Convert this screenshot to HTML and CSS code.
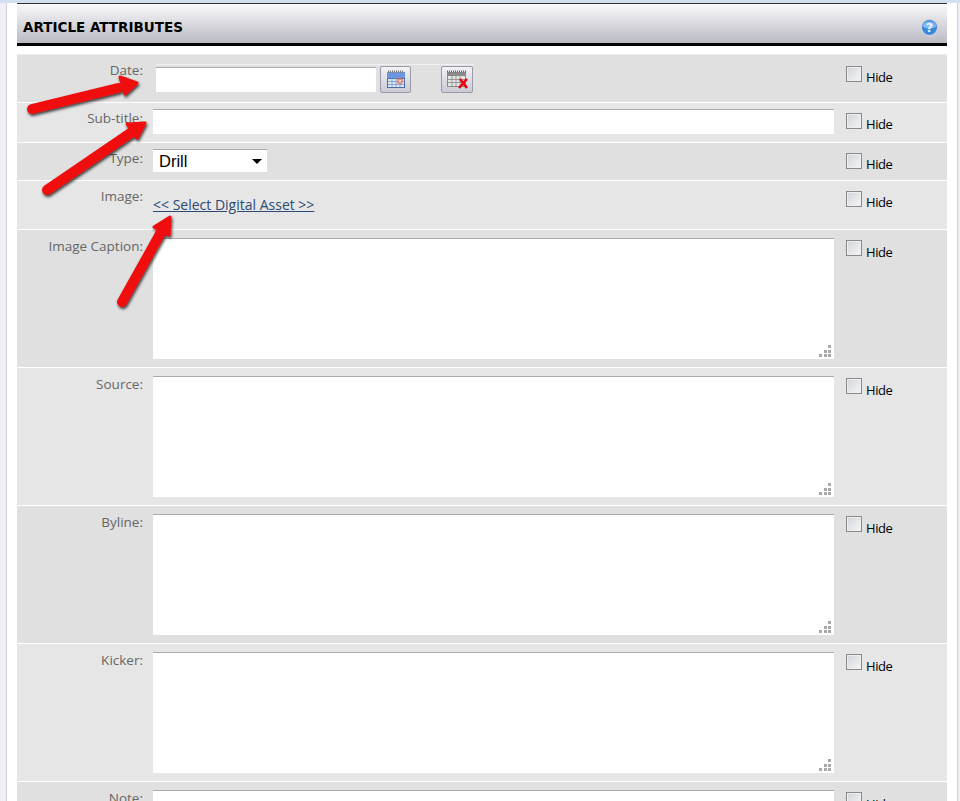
FILE: index.html
```html
<!DOCTYPE html>
<html lang="en">
<head>
<meta charset="utf-8">
<title>Article Attributes</title>
<link rel="stylesheet" href="styles.css">
</head>
<body>
<div class="topline"></div>
<div class="page">
  <div class="gutter"></div>
  <main class="panel">
    <header class="head">
      <h1>ARTICLE ATTRIBUTES</h1>
      <svg class="help" width="18" height="18" viewBox="0 0 18 18"><circle cx="9" cy="9" r="9" fill="#cfd0d6"/><circle cx="8.500" cy="8.500" r="7.500" fill="#3a88dc"/><path d="M1.800 7.500a6.800 6 0 0 1 13.400 0a9 6 0 0 1-13.400 0z" fill="#86bcf0"/><text x="8.500" y="13" text-anchor="middle" class="qm">?</text></svg>
    </header>
    <div class="rows">
      <div class="row dark r-date">
        <label class="lab">Date:</label>
        <div class="field date-field">
          <div class="dategroup">
            <input class="inp date-inp" type="text">
            <button class="calbtn" type="button" aria-label="Pick date">
              <svg width="22" height="20" viewBox="0 0 22 20"><rect x="2" y="2" width="18" height="16" fill="#4a6fa8"/><rect x="2" y="2" width="18" height="6" fill="#6d94e0"/><path d="M3 1.500h16" stroke="#777" stroke-width="2" stroke-dasharray="1 1"/><path d="M3 9h16v8H3z" fill="#dfe8f5"/><path d="M7 8v9M11 8v9M15 8v9M3 11.500h16M3 14.500h16" stroke="#8aa4cc"/><rect x="13" y="9" width="4" height="4" fill="#f5d0c0" stroke="#e0603a"/></svg>
            </button>
            <button class="calbtn clear" type="button" aria-label="Clear date">
              <svg width="26" height="22" viewBox="0 0 26 22"><rect x="3" y="3" width="19" height="15" fill="#8a8a8a"/><path d="M3 2.500h19" stroke="#666" stroke-width="2" stroke-dasharray="1 1"/><path d="M4 7h17v10H4z" fill="#e4e4e4"/><path d="M8 7v10M12 7v10M16 7v10M4 10.500h17M4 13.500h17" stroke="#999"/><path d="M16 10l7 9M23 10l-8 9" stroke="#e8000f" stroke-width="2.600"/></svg>
            </button>
          </div>
        </div>
        <div class="hide"><span class="chk"></span><span class="hl">Hide</span></div>
      </div>
      <div class="row light r-sub">
        <label class="lab">Sub-title:</label>
        <div class="field"><input class="inp full" type="text"></div>
        <div class="hide"><span class="chk"></span><span class="hl">Hide</span></div>
      </div>
      <div class="row dark r-type">
        <label class="lab">Type:</label>
        <div class="field"><div class="sel"><span>Drill</span><i class="caret"></i></div></div>
        <div class="hide"><span class="chk"></span><span class="hl">Hide</span></div>
      </div>
      <div class="row light r-img">
        <label class="lab">Image:</label>
        <div class="field"><a class="asset" href="#">&lt;&lt; Select Digital Asset &gt;&gt;</a></div>
        <div class="hide"><span class="chk"></span><span class="hl">Hide</span></div>
      </div>
      <div class="row dark r-area">
        <label class="lab">Image Caption:</label>
        <div class="field"><div class="area"><svg class="grip" width="13" height="13" viewBox="0 0 13 13"><path d="M9 0h3v3H9zM5 5h3v3H5zM9 5h3v3H9zM0 9h3v3H0zM5 9h3v3H5zM9 9h3v3H9z" fill="#a8a8a8"/></svg></div></div>
        <div class="hide"><span class="chk"></span><span class="hl">Hide</span></div>
      </div>
      <div class="row light r-area">
        <label class="lab">Source:</label>
        <div class="field"><div class="area"><svg class="grip" width="13" height="13" viewBox="0 0 13 13"><path d="M9 0h3v3H9zM5 5h3v3H5zM9 5h3v3H9zM0 9h3v3H0zM5 9h3v3H5zM9 9h3v3H9z" fill="#a8a8a8"/></svg></div></div>
        <div class="hide"><span class="chk"></span><span class="hl">Hide</span></div>
      </div>
      <div class="row dark r-area">
        <label class="lab">Byline:</label>
        <div class="field"><div class="area"><svg class="grip" width="13" height="13" viewBox="0 0 13 13"><path d="M9 0h3v3H9zM5 5h3v3H5zM9 5h3v3H9zM0 9h3v3H0zM5 9h3v3H5zM9 9h3v3H9z" fill="#a8a8a8"/></svg></div></div>
        <div class="hide"><span class="chk"></span><span class="hl">Hide</span></div>
      </div>
      <div class="row light r-area">
        <label class="lab">Kicker:</label>
        <div class="field"><div class="area"><svg class="grip" width="13" height="13" viewBox="0 0 13 13"><path d="M9 0h3v3H9zM5 5h3v3H5zM9 5h3v3H9zM0 9h3v3H0zM5 9h3v3H5zM9 9h3v3H9z" fill="#a8a8a8"/></svg></div></div>
        <div class="hide"><span class="chk"></span><span class="hl">Hide</span></div>
      </div>
      <div class="row dark r-area">
        <label class="lab">Note:</label>
        <div class="field"><div class="area"></div></div>
        <div class="hide"><span class="chk"></span><span class="hl">Hide</span></div>
      </div>
    </div>
  </main>
  <div class="rightgutter"></div>
</div>
<svg class="arrows" width="960" height="801" viewBox="0 0 960 801">
  <defs><filter id="sh" x="-20%" y="-20%" width="140%" height="140%"><feDropShadow dx="1" dy="2" stdDeviation="1.500" flood-color="#000" flood-opacity=".75"/></filter></defs>
  <g filter="url(#sh)" fill="#f00c0c" stroke="#f00c0c" stroke-linejoin="round">
    <path d="M32 109L118 88" stroke-width="10" stroke-linecap="round" fill="none"/>
    <path d="M120 77L137 83L125 94Z" stroke-width="3"/>
    <path d="M47 190L132 132" stroke-width="10" stroke-linecap="round" fill="none"/>
    <path d="M127 124L145 123L137 138Z" stroke-width="3"/>
    <path d="M122 302L160 234" stroke-width="10" stroke-linecap="round" fill="none"/>
    <path d="M154 227L170 217L169 235Z" stroke-width="3"/>
  </g>
</svg>
</body>
</html>
```
FILE: styles.css
```css
html, body { margin: 0; padding: 0; height: 801px; overflow: hidden; background: #fff; }
body { position: relative; font-family: "Open Sans", "Liberation Sans", sans-serif; }
.topline { height: 3px; background: #d3dfee; }
.page { display: flex; height: 798px; }
.gutter { width: 6px; margin-right: 10px; background: #eef0f6; border-right: 1px solid #d0d0dc; }
.panel { width: 930px; flex: none; }
.rightgutter { margin-left: 10px; background: #eef0f6; border-left: 1px solid #d0d0dc; flex: 1; }
.head { box-sizing: border-box; height: 43px; border-top: 1px solid #333; border-bottom: 3px solid #000; background: linear-gradient(#f9f9fb, #b9bac3); display: flex; align-items: center; justify-content: space-between; padding: 6px 8px 0 6px; }
h1 { margin: 0; font: bold 13.5px "DejaVu Sans", sans-serif; color: #000; }
.help { margin-top: 2px; }
.qm { font: bold 12px "DejaVu Sans", sans-serif; fill: #e8f2fc; }
.rows { margin-top: 8px; border-top: 1px solid #eee; }
.row { display: grid; grid-template-columns: 126px 693px 1fr; border-bottom: 1px solid #fff; box-sizing: border-box; }
.dark { background: #e0e0e0; }
.light { background: #e6e6e6; }
.r-date { height: 48px; }
.r-sub { height: 40px; }
.r-type { height: 38px; }
.r-img { height: 49px; }
.r-area { height: 138px; }
.lab { text-align: right; font-size: 13.5px; line-height: 18px; color: #666; padding-top: 6px; }
.r-area .lab { padding-top: 7px; }
.field { padding: 6px 0 0 10px; display: block; }
.inp { box-sizing: border-box; height: 25px; border: 0; border-top: 1px solid #aaa; background: #fff; padding: 0; display: block; outline: 0; }
.full { width: 681px; }
.date-field { padding-top: 9px; padding-left: 13px; }
.dategroup { display: flex; align-items: flex-start; width: 318px; border-top: 1px solid #f2f2f2; padding-top: 1px; }
.date-inp { width: 220px; margin-top: 1px; }
.calbtn { width: 31px; height: 27px; margin-left: 4px; padding: 0; border: 1px solid #9a9aa8; border-radius: 2px; background: linear-gradient(#f2f2f6, #c9cad4); display: flex; align-items: center; justify-content: center; }
.clear { margin-left: 30px; width: 32px; }
.sel { box-sizing: border-box; width: 114px; height: 23px; background: #fff; border-top: 1px solid #aaa; display: flex; align-items: center; justify-content: space-between; padding: 0 5px 0 6px; font: 16.500px "Liberation Sans", sans-serif; color: #000; }
.caret { width: 0; height: 0; border: 5px solid transparent; border-top: 5px solid #000; border-bottom: 0; }
.asset { display: inline-block; margin-top: 10px; font-size: 14px; line-height: 16px; color: #2c4a73; text-decoration: underline; }
.area { box-sizing: border-box; position: relative; width: 681px; height: 121px; background: #fff; border-top: 1px solid #aaa; }
.r-area .field { padding-top: 8px; }
.grip { position: absolute; right: 2px; bottom: 1px; }
.hide { display: flex; align-items: flex-start; padding: 10px 0 0 10px; }
.r-date .hide { padding-top: 11px; }
.chk { box-sizing: border-box; width: 16px; height: 16px; border: 1px solid #8a8a8a; background: linear-gradient(135deg, #d0d4d8, #f6f6f8); box-shadow: inset 0 0 0 1px #eee; }
.hl { margin: 3px 0 0 4px; font: 13px/16px "Open Sans", "Liberation Sans", sans-serif; letter-spacing: -.4px; color: #000; }
.r-area .hl { margin-top: 4px; }
.arrows { position: absolute; left: 0; top: 0; pointer-events: none; }
```
